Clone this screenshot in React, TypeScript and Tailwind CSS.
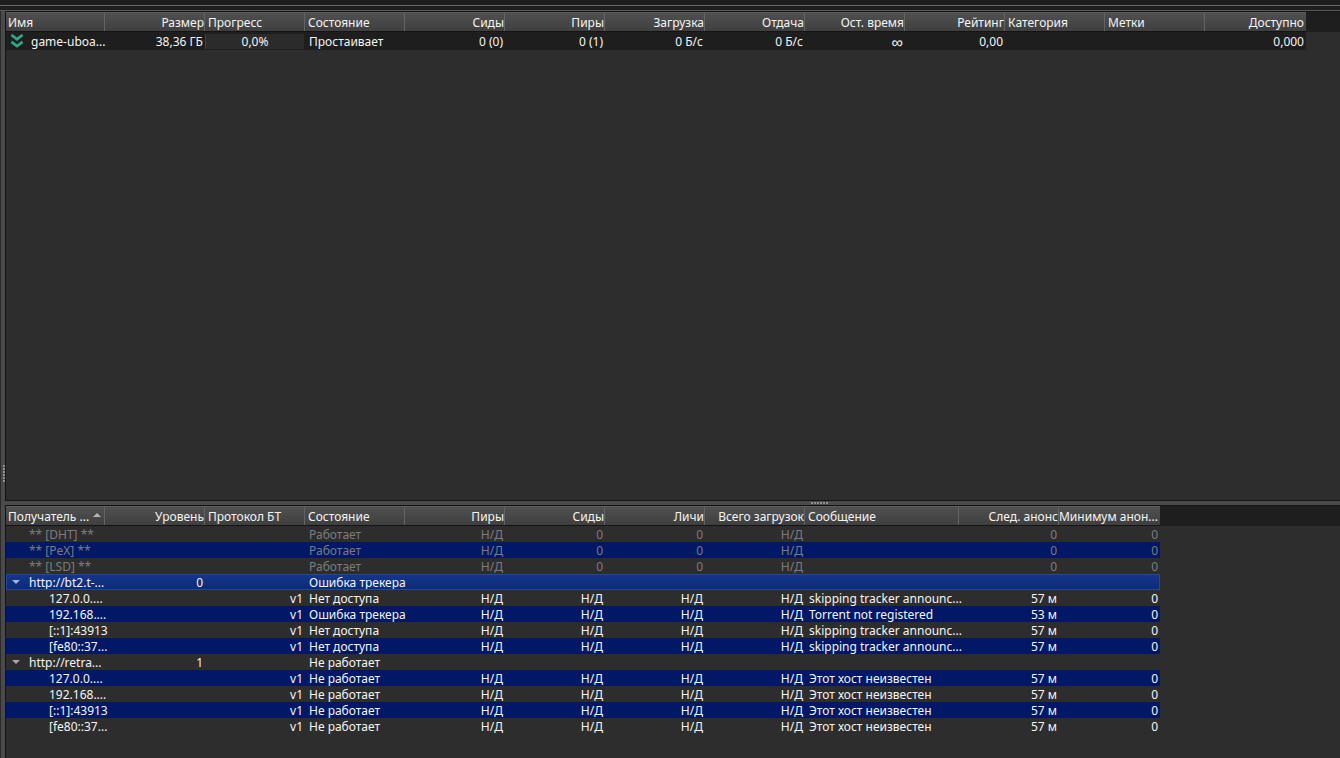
import clsx from "clsx";

type Align = "left" | "right" | "center";

type Column = {
  title: string;
  width: string;
  header: Align;
  cell: Align;
};

const transferColumns: Column[] = [
  { title: "Имя", width: "w-[99px]", header: "left", cell: "left" },
  { title: "Размер", width: "w-[100px]", header: "right", cell: "right" },
  { title: "Прогресс", width: "w-[100px]", header: "left", cell: "center" },
  { title: "Состояние", width: "w-[100px]", header: "left", cell: "left" },
  { title: "Сиды", width: "w-[100px]", header: "right", cell: "right" },
  { title: "Пиры", width: "w-[100px]", header: "right", cell: "right" },
  { title: "Загрузка", width: "w-[100px]", header: "right", cell: "right" },
  { title: "Отдача", width: "w-[100px]", header: "right", cell: "right" },
  { title: "Ост. время", width: "w-[100px]", header: "right", cell: "right" },
  { title: "Рейтинг", width: "w-[100px]", header: "right", cell: "right" },
  { title: "Категория", width: "w-[100px]", header: "left", cell: "left" },
  { title: "Метки", width: "w-[100px]", header: "left", cell: "left" },
  { title: "Доступно", width: "w-[101px]", header: "right", cell: "right" },
];

const trackerColumns: Column[] = [
  { title: "Получатель ...", width: "w-[99px]", header: "left", cell: "left" },
  { title: "Уровень", width: "w-[100px]", header: "right", cell: "right" },
  { title: "Протокол БТ", width: "w-[100px]", header: "left", cell: "right" },
  { title: "Состояние", width: "w-[100px]", header: "left", cell: "left" },
  { title: "Пиры", width: "w-[100px]", header: "right", cell: "right" },
  { title: "Сиды", width: "w-[100px]", header: "right", cell: "right" },
  { title: "Личи", width: "w-[100px]", header: "right", cell: "right" },
  { title: "Всего загрузок", width: "w-[100px]", header: "right", cell: "right" },
  { title: "Сообщение", width: "w-[154px]", header: "left", cell: "left" },
  { title: "След. анонс", width: "w-[100px]", header: "right", cell: "right" },
  { title: "Минимум анон...", width: "w-[101px]", header: "right", cell: "right" },
];

const torrent = ["38,36 ГБ", "0,0%", "Простаивает", "0 (0)", "0 (1)", "0 Б/с", "0 Б/с", "∞", "0,00", "", "", "0,000"];

type Tracker = {
  name: string;
  kind: "system" | "tracker" | "endpoint";
  selected?: boolean;
  cells: string[];
};

const NA = "Н/Д";

const system = (name: string): Tracker => ({
  name,
  kind: "system",
  cells: ["", "", "Работает", NA, "0", "0", NA, "", "0", "0"],
});

const tracker = (name: string, tier: string, status: string, selected = false): Tracker => ({
  name,
  kind: "tracker",
  selected,
  cells: [tier, "", status, "", "", "", "", "", "", ""],
});

const endpoint = (name: string, status: string, message: string, next: string): Tracker => ({
  name,
  kind: "endpoint",
  cells: ["", "v1", status, NA, NA, NA, NA, message, next, "0"],
});

const trackers: Tracker[] = [
  system("** [DHT] **"),
  system("** [PeX] **"),
  system("** [LSD] **"),
  tracker("http://bt2.t-...", "0", "Ошибка трекера", true),
  endpoint("127.0.0....", "Нет доступа", "skipping tracker announc...", "57 м"),
  endpoint("192.168....", "Ошибка трекера", "Torrent not registered", "53 м"),
  endpoint("[::1]:43913", "Нет доступа", "skipping tracker announc...", "57 м"),
  endpoint("[fe80::37...", "Нет доступа", "skipping tracker announc...", "57 м"),
  tracker("http://retra...", "1", "Не работает"),
  endpoint("127.0.0....", "Не работает", "Этот хост неизвестен", "57 м"),
  endpoint("192.168....", "Не работает", "Этот хост неизвестен", "57 м"),
  endpoint("[::1]:43913", "Не работает", "Этот хост неизвестен", "57 м"),
  endpoint("[fe80::37...", "Не работает", "Этот хост неизвестен", "57 м"),
];

const alignClass: Record<Align, string> = {
  left: "text-left pl-1",
  right: "text-right pr-0.5",
  center: "text-center",
};

const HeaderRow = ({ columns, sorted }: { columns: Column[]; sorted?: number }) => (
  <thead>
    <tr>
      {columns.map((col, i) => (
        <th key={col.title} scope="col" className={clsx("p-0 font-normal", col.width)}>
          <div className="h-5 border-y border-t-[#5c5c5c] border-b-[#141414] bg-linear-to-b from-[#505050] to-[#3f3f3f]">
            <div
              className={clsx(
                "flex h-[18px] items-center pt-0.5 leading-4",
                i < columns.length - 1 && "border-r border-[#636363]",
                col.header === "right" ? "justify-end" : i === 0 ? "pl-0.5" : "pl-[3px]",
                i === columns.length - 1 && "pr-0.5",
              )}
            >
              {col.title}
              {sorted === i && (
                <svg viewBox="0 0 8 4" className="mb-1 ml-auto mr-[3px] h-1 w-2 shrink-0 fill-[#b4b4b4]">
                  <path d="M4 0 8 4H0z" />
                </svg>
              )}
            </div>
          </div>
        </th>
      ))}
    </tr>
  </thead>
);

const DownloadIcon = () => (
  <svg viewBox="0 0 14 14" className="my-0.5 h-3.5 w-3.5 shrink-0 fill-none stroke-[#2fa58c]" strokeWidth="2.8">
    <path d="M1.4 1 7 5.2 12.6 1M1.4 7.9 7 12.1l5.6-4.2" />
  </svg>
);

const Grip = ({ vertical }: { vertical?: boolean }) => (
  <div className={clsx("flex gap-px", vertical && "flex-col")}>
    {[0, 1, 2, 3, 4, 5].map((i) => (
      <span key={i} className="h-0.5 w-0.5 bg-[#8f8f8f]" />
    ))}
  </div>
);

const TransferTable = () => (
  <table className="w-[1300px] table-fixed border-separate border-spacing-0">
    <HeaderRow columns={transferColumns} />
    <tbody>
      <tr className="bg-[#1e1e1e]">
        <td className="p-0">
          <div className="flex h-[18px] gap-[7px] pl-1 leading-5">
            <DownloadIcon />
            <span>game-uboa...</span>
          </div>
        </td>
        {torrent.map((value, i) => {
          const col = transferColumns[i + 1];
          return (
            <td key={col.title} className={clsx("p-0", alignClass[col.cell])}>
              {col.cell === "center" ? (
                <div className="mr-px h-[15px] border-l border-[#1d4d6e] bg-[#2b2b2b] leading-4">{value}</div>
              ) : (
                <div className={clsx("h-[18px] leading-5", value === "∞" && "text-base")}>{value}</div>
              )}
            </td>
          );
        })}
      </tr>
    </tbody>
  </table>
);

const TrackerTable = () => (
  <table className="w-[1154px] table-fixed border-separate border-spacing-0">
    <HeaderRow columns={trackerColumns} sorted={0} />
    <tbody>
      {trackers.map((row, index) => (
        <tr
          key={index}
          className={clsx(
            row.selected
              ? "bg-linear-to-b from-[#15368c] to-[#0b2a76] outline outline-1 -outline-offset-1 outline-[#1f4a9c]"
              : index % 2 === 1 && "bg-[#001866]",
            row.kind === "system" && "text-[#7c7c7c]",
          )}
        >
          <td className="p-0">
            <div
              className={clsx(
                "flex h-4 leading-[18px]",
                row.kind === "system" && "pl-[23px]",
                row.kind === "tracker" && "pl-1.5",
                row.kind === "endpoint" && "pl-[43px]",
              )}
            >
              {row.kind === "tracker" && (
                <button type="button" aria-label="Свернуть" className="mr-[9px] flex h-4 w-2 items-center">
                  <svg viewBox="0 0 8 4" className={clsx("h-1 w-2", row.selected ? "fill-[#a3b4dc]" : "fill-[#a8a8a8]")}>
                    <path d="M0 0h8L4 4z" />
                  </svg>
                </button>
              )}
              <span>{row.name}</span>
            </div>
          </td>
          {row.cells.map((value, i) => {
            const col = trackerColumns[i + 1];
            return (
              <td key={col.title} className={clsx("p-0", alignClass[col.cell])}>
                <div className="h-4 leading-[18px]">{value}</div>
              </td>
            );
          })}
        </tr>
      ))}
    </tbody>
  </table>
);

const App = () => {
  return (
    <div className="flex h-screen flex-col overflow-hidden bg-[#1e1e1e] font-['Noto_Sans',sans-serif] text-[12px] leading-4 whitespace-nowrap text-[#f4f4f4]">
      <div className="h-1.5 shrink-0 border-b border-[#696969]" />
      <div className="h-[5px] shrink-0 border-b border-[#5a5a5a]" />
      <div className="flex min-h-0 flex-1">
        <div className="flex w-[5px] shrink-0 items-end justify-end border-l border-[#2a2a2a] bg-[#4a4a4a] pb-[276px]">
          <Grip vertical />
        </div>
        <main className="flex min-w-0 flex-1 flex-col">
          <section className="min-h-0 flex-1 overflow-hidden border border-r-0 border-[#141414] bg-[#2d2d2d]">
            <div className="bg-linear-to-b from-[#1e1e1e] from-[20px] to-[#2d2d2d] to-[20px]">
              <TransferTable />
            </div>
          </section>
          <div className="flex h-1 shrink-0 items-center justify-center bg-[#4a4a4a] pl-[294px]">
            <Grip />
          </div>
          <section className="h-[253px] shrink-0 overflow-hidden border-t border-l border-[#141414] bg-[#2d2d2d]">
            <div className="bg-linear-to-b from-[#1e1e1e] from-[20px] to-[#2d2d2d] to-[20px]">
              <TrackerTable />
            </div>
          </section>
        </main>
      </div>
    </div>
  );
};

export default App;
